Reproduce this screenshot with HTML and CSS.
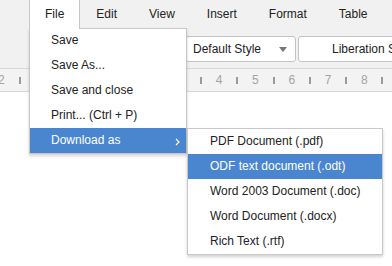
FILE: index.html
```html
<!DOCTYPE html>
<html lang="en">
<head>
    <meta charset="UTF-8">
    <title>Editor</title>
    <link rel="stylesheet" href="styles.css">
</head>
<body>
    <div class="app">
        <ul class="menubar">
            <li class="menu-item open">File
                <div class="dropdown">
                    <ul>
                        <li>Save</li>
                        <li>Save As...</li>
                        <li>Save and close</li>
                        <li>Print... (Ctrl + P)</li>
                        <li class="active">Download as
                            <svg class="chevron" width="5" height="8" viewBox="0 0 5 8"><path d="M1 1l3 3-3 3" fill="none" stroke="#fff" stroke-width="1.2"/></svg>
                        </li>
                    </ul>
                    <ul class="submenu">
                        <li>PDF Document (.pdf)</li>
                        <li class="active">ODF text document (.odt)</li>
                        <li>Word 2003 Document (.doc)</li>
                        <li>Word Document (.docx)</li>
                        <li>Rich Text (.rtf)</li>
                    </ul>
                </div>
            </li>
            <li class="menu-item">Edit</li>
            <li class="menu-item">View</li>
            <li class="menu-item">Insert</li>
            <li class="menu-item">Format</li>
            <li class="menu-item">Table</li>
        </ul>

        <div class="toolbar">
            <div class="select style-select">
                <span>Default Style</span>
                <svg width="8" height="5" viewBox="0 0 8 5"><path d="M0 0h8L4 5z" fill="#777"/></svg>
            </div>
            <div class="select font-select">Liberation Sans</div>
        </div>

        <!-- cells under the open menu are left without numbers -->
        <div class="ruler">
            <div class="cell"><i></i><span>2</span></div>
            <div class="cell"><i></i><span></span></div>
            <div class="cell"><i></i><span></span></div>
            <div class="cell"><i></i><span></span></div>
            <div class="cell"><i></i><span></span></div>
            <div class="cell"><i></i><span></span></div>
            <div class="cell"><i></i><span>4</span></div>
            <div class="cell"><i></i><span>5</span></div>
            <div class="cell"><i></i><span>6</span></div>
            <div class="cell"><i></i><span>7</span></div>
            <div class="cell"><i></i><span>8</span></div>
            <div class="cell"><i></i><span></span></div>
        </div>

        <div class="document"></div>
    </div>
</body>
</html>
```

FILE: styles.css
```css
body {
    margin: 0;
    font-family: "Liberation Sans", Arial, sans-serif;
    font-size: 12px;
    color: #222;
    background: #fff;
}
ul {
    list-style: none;
    margin: 0;
    padding: 0;
}
.app {
    width: 392px;
    height: 266px;
    overflow: hidden;
    position: relative;
}
.menubar {
    display: flex;
    height: 28px;
    padding-left: 29px;
    background: #f1f1f1;
    position: relative;
    z-index: 2;
}
.menu-item {
    position: relative;
    line-height: 28px;
    padding: 0 15px;
    border-left: 1px solid transparent;
    border-right: 1px solid transparent;
}
.menu-item.open {
    background: #fff;
    border-color: #c8c8c8;
}
.dropdown {
    position: absolute;
    top: 28px;
    left: -1px;
    width: 158px;
    box-sizing: border-box;
    background: #fff;
    border: 1px solid #c8c8c8;
    border-top: none;
    box-shadow: 0 2px 3px rgba(0, 0, 0, 0.18);
}
.dropdown::before {
    content: "";
    position: absolute;
    top: 0;
    left: 49px;
    right: -1px;
    border-top: 1px solid #c8c8c8;
}
.dropdown li {
    position: relative;
    height: 25px;
    line-height: 25px;
    padding-left: 21px;
    white-space: nowrap;
}
.dropdown li.active {
    background: #4a86d0;
    color: #fff;
}
.chevron {
    position: absolute;
    right: 6px;
    top: 10px;
}
.submenu {
    position: absolute;
    top: 100px;
    left: 157px;
    width: 196px;
    box-sizing: border-box;
    background: #fff;
    border: 1px solid #c8c8c8;
    box-shadow: 0 2px 3px rgba(0, 0, 0, 0.18);
}
.dropdown .submenu li {
    padding-left: 22px;
}
.toolbar {
    display: flex;
    height: 40px;
    box-sizing: border-box;
    padding: 8px 0 6px 185px;
    background: #f1f1f1;
}
.select {
    flex-shrink: 0;
    height: 26px;
    box-sizing: border-box;
    background: #fff;
    border: 1px solid #c4c4c4;
    border-radius: 3px;
    line-height: 24px;
    white-space: nowrap;
}
.style-select {
    width: 111px;
    display: flex;
    align-items: center;
    justify-content: space-between;
    padding: 0 8px 0 7px;
}
.font-select {
    margin-left: 2px;
    width: 160px;
    padding-left: 33px;
}
.ruler {
    display: flex;
    height: 24px;
    box-sizing: border-box;
    margin-left: -17.8px;
    background: #f3f3f3;
    border-top: 1px solid #d6d6d6;
    border-bottom: 1px solid #d6d6d6;
    color: #a4a4a4;
    font-size: 12px;
}
.cell {
    flex: 0 0 36.3px;
    display: flex;
    align-items: center;
}
.cell i {
    width: 2px;
    height: 7px;
    background: #9a9a9a;
}
.cell span {
    flex: 1;
    text-align: center;
}
.document {
    height: 174px;
    background: #fff;
}
```
